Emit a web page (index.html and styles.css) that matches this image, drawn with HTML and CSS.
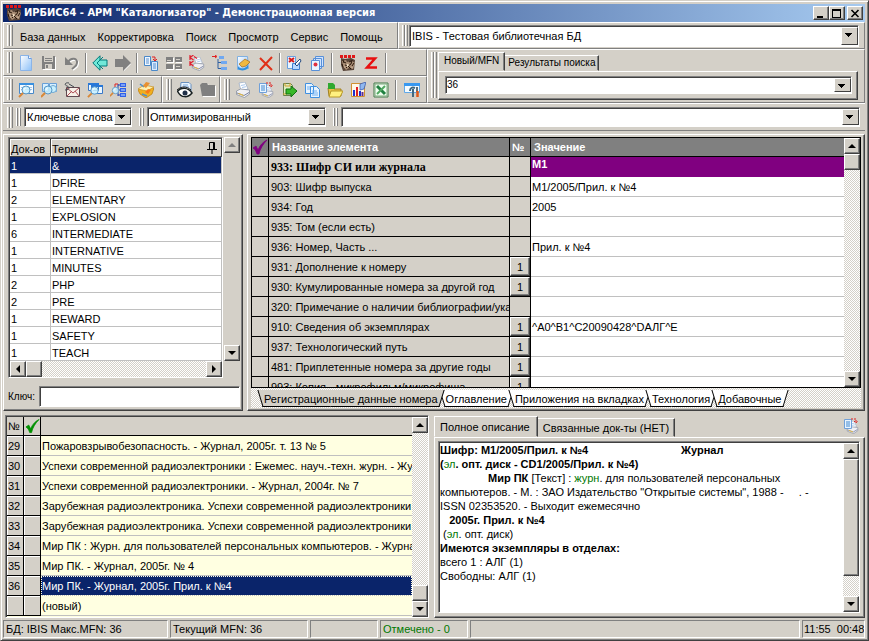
FILE: index.html
```html
<!DOCTYPE html>
<html lang="ru">
<head>
<meta charset="utf-8">
<title>ИРБИС64 - АРМ "Каталогизатор"</title>
<link rel="stylesheet" href="styles.css">
</head>
<body>
<svg class="defs" aria-hidden="true">
  <defs>
    <linearGradient id="paper" x1="0" y1="0" x2="1" y2="1"><stop offset="0" stop-color="#fff"/><stop offset="1" stop-color="#8cc0f8"/></linearGradient>
  </defs>
  <symbol id="i-new" viewBox="0 0 16 16"><path d="M2.500 .500h8l3 3v12h-11z" fill="url(#paper)" stroke="#8ab4e8"/><path d="M10.500 .500v3h3" fill="#fff" stroke="#6c9cdc"/></symbol>
  <symbol id="i-save" viewBox="0 0 16 16"><path d="M2 2h13v13H2z" fill="#fff"/><path d="M1 1h13v13H1z" fill="#808080"/><path d="M3 1h9v6H3zM4 9h7v5H4z" fill="#d4d0c8"/><path d="M4 3.500h7M4 5.500h7" stroke="#808080"/><path d="M5 10h2v3H5z" fill="#808080"/></symbol>
  <symbol id="i-undo" viewBox="0 0 16 16"><path d="M5 8c3-5 10-4 9 1 0 3-3 4-5 6" fill="none" stroke="#fff" stroke-width="2"/><path d="M1 2v8h8z" fill="#808080"/><path d="M4 7c3-5 10-4 9 1 0 3-3 4-5 6" fill="none" stroke="#808080" stroke-width="2"/></symbol>
  <symbol id="i-prev" viewBox="0 0 16 16"><path d="M8 .800L.800 8 8 15.200v-4.200h7V5H8z" fill="#70e8d8" stroke="#007878"/><path d="M11 2L5 8l6 6" fill="none" stroke="#008080"/></symbol>
  <symbol id="i-next" viewBox="0 0 16 16"><path d="M9 2l7 7-7 7v-4H1V6h8z" fill="#fff"/><path d="M8 0l8 8-8 8v-4H0V4h8z" fill="#808080"/></symbol>
  <symbol id="i-copyfield" viewBox="0 0 16 16"><path d="M1.500 1.500h6v9h-6z" fill="#eef6ff" stroke="#4a88c8"/><path d="M8.500 6.500h6v9h-6z" fill="#dcecff" stroke="#4a88c8"/><path d="M3 4h3M3 6h3M3 8h3M10 9h3M10 11h3M10 13h3" stroke="#5890d0"/><path d="M9 2h3v3M10 4l2 2 2-2" fill="none" stroke="#e02020"/></symbol>
  <symbol id="i-blocks" viewBox="0 0 16 16"><path d="M1 3h7v5H1zM10 3h6v5h-6zM1 10h7v5H1zM10 10h6v5h-6z" fill="#fff"/><path d="M0 2h7v5H0zM9 2h7v5H9zM0 9h7v5H0zM9 9h7v5H9z" fill="#808080"/><path d="M1 5.500h4M10 4.500h4M10 11.500h4" stroke="#d4d0c8"/></symbol>
  <symbol id="i-printer" viewBox="0 0 16 16"><path d="M4 1l6-1 3 7-7 2z" fill="#fff" stroke="#a0b0c8" stroke-width=".800"/><path d="M1.500 9l4-2 9 1v4l-5 3.500-8-3z" fill="#f0f0f4" stroke="#8890a0" stroke-width=".800"/><path d="M2 11l7 2.500 5-3" fill="none" stroke="#7880a0"/><path d="M3.500 11.500l5 2" stroke="#f0c030"/><path d="M6 3.500l4-.800M7 5.500l4-.800" stroke="#90b8e8" stroke-width=".800"/></symbol>
  <symbol id="i-printk" viewBox="0 0 16 16"><use href="#i-printer" x="2" y="2" width="14" height="14"/><path d="M1 0v5M4.500 0L1 2.500 4.500 5M1 6v5M4.500 6L1 8.500 4.500 11M5 1.500l3 2" fill="none" stroke="#e02030" stroke-width="1.200"/></symbol>
  <symbol id="i-tree" viewBox="0 0 16 16"><path d="M0 1.500h4M3 0l2 1.500L3 3" fill="none" stroke="#e02020"/><path d="M7 2.500h5M9 7.500h6M9 13.500h6" stroke="#70a8f0" stroke-width="3"/><path d="M6 4v9.500h3M6 7.500h3" fill="none" stroke="#3060a0"/></symbol>
  <symbol id="i-edit" viewBox="0 0 16 16"><path d="M2.500 1.500h10l1 12-11 1z" fill="url(#paper)" stroke="#80b0e0"/><path d="M3 11c2 4 9 3 10-2v4c-2 3-8 3-10 1z" fill="#3090e0"/><path d="M4 9l6-5 5 3-4 4-4 1z" fill="#f0b840" stroke="#a06820" stroke-width=".700"/></symbol>
  <symbol id="i-delete" viewBox="0 0 16 16"><path d="M2 3l12 12M14 2L2 15" stroke="#e03018" stroke-width="2" fill="none"/></symbol>
  <symbol id="i-docx" viewBox="0 0 16 16"><path d="M1.500 1.500h8v12h-8z" fill="#e8f4ff" stroke="#68a0e0"/><path d="M6.500 8.500h7v6h-7z" fill="#b8d8ff" stroke="#4080d0"/><path d="M3 3l5 4M8 3L3 7" stroke="#d81818" stroke-width="2"/><path d="M9 9l5-5 1 2-4 5z" fill="#fff" stroke="#204880"/></symbol>
  <symbol id="i-docs" viewBox="0 0 16 16"><path d="M6.500 1.500h8v10h-8zM4.500 3.500h8v10h-8z" fill="#d0e4ff" stroke="#5890d8"/><path d="M2.500 5.500h8v10h-8z" fill="#e8f4ff" stroke="#5890d8"/><circle cx="6.500" cy="9.500" r="2" fill="#e03040"/></symbol>
  <symbol id="i-irbis" viewBox="0 0 16 16"><path d="M1 3l4 1 6-1 4 2-1 10-11 1-2-6z" fill="#584438"/><path d="M2 6l4-1 1 2 5-1 3 2-2 6-4-1-3 2-3-4z" fill="#a88c74"/><path d="M4 7l2 1M9 7l2-1M5 10l3 1 3-2M6 13l2-2 3 3M2 9l1 3M12 11l2-3M3 5l1 3M12 5l-1 4" stroke="#28180c" fill="none"/><path d="M7 9l2 1-2 2zM4 11l1 2M11 12l2 1" fill="#fff0d0" stroke="#e8d0b8" stroke-width=".500"/><path d="M0 1.500h16" stroke="#e01818" stroke-width="3" stroke-dasharray="3 1"/></symbol>
  <symbol id="i-z" viewBox="0 0 16 16"><path d="M3 3.500h9L4 12.500h10" fill="none" stroke="#e81010" stroke-width="2.500"/></symbol>
  <symbol id="i-lens" viewBox="0 0 16 16"><circle cx="8" cy="8" r="4" fill="#c8f0ff" fill-opacity=".850" stroke="#5898c8"/><path d="M5 11l-4 4" stroke="#d88838" stroke-width="2"/><path d="M6 8c0-2 2-2 2-2" stroke="#fff" fill="none"/></symbol>
  <symbol id="i-find" viewBox="0 0 16 16"><path d="M1.500 1.500h14v10h-14z" fill="#f4faff" stroke="#4888c8"/><path d="M1 2h15" stroke="#3890e0" stroke-width="2"/><path d="M3 5.500h11M3 7.500h11" stroke="#a8c8e8"/><use href="#i-lens" width="16" height="16"/></symbol>
  <symbol id="i-find2" viewBox="0 0 16 16"><path d="M1.500 1.500h6v8h-6zM8.500 1.500h7v8h-7z" fill="#d8f0ff" stroke="#68a0d8"/><circle cx="12" cy="7" r="3.500" fill="#c8f0ff" stroke="#70a8d0"/><use href="#i-lens" x="-1" width="16" height="16"/></symbol>
  <symbol id="i-letter" viewBox="0 0 16 16"><path d="M2.500 5.500h13v9h-13z" fill="#f8f0e8" stroke="#604850"/><path d="M3 6l6 5 6-5M3 14l5-5M15 14l-4-5" stroke="#b05058" fill="none"/><path d="M5 1C1 0 0 3 3 4s3 4-2 4M5 2l5 3" fill="none" stroke="#404850"/></symbol>
  <symbol id="i-find3" viewBox="0 0 16 16"><path d="M1.500 1.500h10v7h-10zM4.500 3.500h11v8h-11z" fill="#eaf6ff" stroke="#3878c8"/><path d="M1 2h11M4 4h12" stroke="#2878d8" stroke-width="2"/><use href="#i-lens" y="1" width="15" height="15"/></symbol>
  <symbol id="i-findtree" viewBox="0 0 16 16"><path d="M8 2v12M6 8h4M8 3h3M8 13h3" stroke="#2040b0"/><path d="M10 1h6v4h-6zM10 6h6v4h-6zM10 11h6v4h-6z" fill="#3060e8"/><path d="M11 3h4M11 8h4M11 13h4" stroke="#c8e0ff"/><path d="M5 5V2h3" fill="none" stroke="#e02020"/><use href="#i-lens" x="-1" y="2" width="13" height="13"/></symbol>
  <symbol id="i-bee" viewBox="0 0 16 16"><path d="M0 8l7-4 9 2-2 6-6 4-6-4z" fill="#f0b020" stroke="#b87810" stroke-width=".700"/><path d="M0 7l6-4 10 2-7 4z" fill="#fff0b0" stroke="#c89020" stroke-width=".700"/><path d="M2 2l4 3M4 12l5 2" stroke="#5090c8" stroke-width="1.500"/><path d="M8 0l4 1-4 5-3-2z" fill="#e89030"/><path d="M7 10l3-3 3 1-3 4z" fill="#f87818"/></symbol>
  <symbol id="i-eye" viewBox="0 0 16 16"><path d="M4 .500h8l2 2v9H3z" fill="#e8f4ff" stroke="#6890c0"/><path d="M6 3h5M6 5h6" stroke="#78a8e0"/><path d="M0 10c4-5 11-5 15 1-4 5-11 5-14-1" fill="#fff" stroke="#182020" stroke-width="1.500"/><circle cx="8" cy="11" r="2.500" fill="#203048"/><path d="M0 8c4-4 10-4 14 0" stroke="#202020" fill="none"/></symbol>
  <symbol id="i-folder" viewBox="0 0 16 16"><path d="M2 4l2-2h4l1 2h7v11H3z" fill="#fff"/><path d="M0 3l2-2h5l1 2h7v11H2z" fill="#808080"/></symbol>
  <symbol id="i-printdoc" viewBox="0 0 16 16"><use href="#i-printer" x="3" y="3" width="13" height="13"/><path d="M1.500 1.500h7v9h-7z" fill="#e8f4ff" stroke="#70a0d8"/><path d="M3 4h4M3 6h4M3 8h4" stroke="#4088d0"/><path d="M8 1h5v4M11 3l2 2 2-2" fill="none" stroke="#e02020" stroke-dasharray="2 1"/></symbol>
  <symbol id="i-export" viewBox="0 0 16 16"><path d="M2.500 1.500h7l2 2v10h-9z" fill="#e0ecc0" stroke="#688048"/><path d="M4 1v3h5V1M2 12h4" stroke="#d0a030" fill="none"/><path d="M5 7h5V4l6 5-6 6v-3H5z" fill="#38b828" stroke="#107010"/></symbol>
  <symbol id="i-copy" viewBox="0 0 16 16"><path d="M1.500 1.500h6l2 2v8h-8zM6.500 4.500h6l3 3v8h-9z" fill="#e8f4ff" stroke="#4090e0"/><path d="M3 5h3M3 7h3M8 9h5M8 11h6M8 13h6" stroke="#70b0f0"/></symbol>
  <symbol id="i-open" viewBox="0 0 16 16"><path d="M1 6h5l1 1h7v7H2z" fill="#e8c048" stroke="#a08020"/><path d="M4 9h12l-3 6H2z" fill="#fff080" stroke="#b89828"/><path d="M1 1h5l2 2v4H1z" fill="#30a830"/></symbol>
  <symbol id="i-chart" viewBox="0 0 16 16"><path d="M1.500 1.500h13v13h-13z" fill="#fff8e8" stroke="#d09030"/><path d="M4 8v6M10 9v5" stroke="#2030d0" stroke-width="2"/><path d="M7 5v9" stroke="#e02020" stroke-width="2"/><path d="M12.500 10v4" stroke="#603090" stroke-width="2"/><path d="M10 2l6-2-2 7-4 1z" fill="#90b8f0" stroke="#4060b0" stroke-width=".800"/></symbol>
  <symbol id="i-excel" viewBox="0 0 16 16"><path d="M1 1h14v14H1z" fill="#f0fff0" stroke="#407848"/><path d="M2 2h12v12H2z" fill="none" stroke="#80a880"/><path d="M4 4l8 8" stroke="#208040" stroke-width="3"/><path d="M12 4l-8 8" stroke="#50a860" stroke-width="2"/></symbol>
  <symbol id="i-tools" viewBox="0 0 16 16"><path d="M.500 1.500h15v9H.500z" fill="#f4fbff" stroke="#60a8e8"/><path d="M0 2.500h16" stroke="#3898f0" stroke-width="3"/><path d="M6 9c0-3 2-4 5-3M9 7v8" stroke="#406880" fill="none" stroke-width="2"/><path d="M13 5v5" stroke="#607078" stroke-width="2"/><path d="M13.500 9v6" stroke="#e05818" stroke-width="2.500"/></symbol>
  <symbol id="i-tick" viewBox="0 0 16 16"><path d="M1 9l3-2 2 4c2-5 5-8 9-10C11 5 8 10 7 15H5C4 12 3 10 1 9z" fill="currentColor" stroke="currentColor" stroke-width=".800"/></symbol>
  <symbol id="i-pin" viewBox="0 0 10 12"><path d="M2.500 7V.500h5V7M0 7.500h10M5 8v4" stroke="#000" fill="none"/><path d="M6.500 1v6" stroke="#000"/></symbol>
</svg>

<div class="window">
  <header class="titlebar">
    <svg class="icon"><use href="#i-irbis"/></svg>
    <h1>ИРБИС64 - АРМ "Каталогизатор" - Демонстрационная версия</h1>
    <div class="winbtns">
      <button class="raised" aria-label="Свернуть"><svg viewBox="0 0 10 9"><path d="M1 7h6v2H1z"/></svg></button>
      <button class="raised" aria-label="Развернуть"><svg viewBox="0 0 10 9"><path d="M0 0h9v9H0zM1 2v6h7V2z" fill-rule="evenodd"/></svg></button>
      <button class="raised close" aria-label="Закрыть"><svg viewBox="0 0 10 9"><path d="M1.500 1l7 7M8.500 1l-7 7" stroke="#000" stroke-width="1.600"/></svg></button>
    </div>
  </header>

  <div class="row">
    <nav class="band menu" aria-label="Меню">
      <i class="grip"></i>
      <button>База данных</button><button>Корректировка</button><button>Поиск</button><button>Просмотр</button><button>Сервис</button><button>Помощь</button>
    </nav>
    <div class="band grow">
      <i class="grip"></i>
      <div class="combo db"><select aria-label="База данных"><option>IBIS - Тестовая библиотечная БД</option></select></div>
    </div>
  </div>

  <div class="tools">
    <div class="toolcol">
      <div class="row">
        <div class="band grow">
          <i class="grip"></i>
          <button class="tb" aria-label="Новая запись"><svg><use href="#i-new"/></svg></button>
          <button class="tb" aria-label="Сохранить"><svg><use href="#i-save"/></svg></button>
          <button class="tb" aria-label="Отменить"><svg><use href="#i-undo"/></svg></button>
          <i class="sep"></i>
          <button class="tb" aria-label="Предыдущая"><svg><use href="#i-prev"/></svg></button>
          <button class="tb" aria-label="Следующая"><svg><use href="#i-next"/></svg></button>
          <i class="sep"></i>
          <button class="tb" aria-label="Копировать поле"><svg><use href="#i-copyfield"/></svg></button>
          <button class="tb" aria-label="Блоки"><svg><use href="#i-blocks"/></svg></button>
          <button class="tb" aria-label="Печать карточки"><svg><use href="#i-printk"/></svg></button>
          <button class="tb" aria-label="Иерархия"><svg><use href="#i-tree"/></svg></button>
          <button class="tb" aria-label="Правка"><svg><use href="#i-edit"/></svg></button>
          <button class="tb" aria-label="Удалить"><svg><use href="#i-delete"/></svg></button>
          <i class="sep"></i>
          <button class="tb" aria-label="Удалить документ"><svg><use href="#i-docx"/></svg></button>
          <button class="tb" aria-label="Документы"><svg><use href="#i-docs"/></svg></button>
          <i class="sep wide"></i>
          <button class="tb" aria-label="Ирбис"><svg><use href="#i-irbis"/></svg></button>
          <button class="tb" aria-label="Z39.50"><svg><use href="#i-z"/></svg></button>
          <i class="sep wide"></i>
        </div>
      </div>
      <div class="row">
        <div class="band">
          <i class="grip"></i>
          <button class="tb" aria-label="Поиск"><svg><use href="#i-find"/></svg></button>
          <button class="tb" aria-label="Комплексный поиск"><svg><use href="#i-find2"/></svg></button>
          <button class="tb" aria-label="Запрос"><svg><use href="#i-letter"/></svg></button>
          <button class="tb" aria-label="Последовательный поиск"><svg><use href="#i-find3"/></svg></button>
          <button class="tb" aria-label="Поиск по рубрикатору"><svg><use href="#i-findtree"/></svg></button>
          <i class="sep"></i>
          <button class="tb" aria-label="Очистить"><svg><use href="#i-bee"/></svg></button>
          <i class="sep blank"></i>
        </div>
        <div class="band">
          <i class="grip"></i>
          <button class="tb" aria-label="Просмотр"><svg><use href="#i-eye"/></svg></button>
          <button class="tb" aria-label="Папка"><svg><use href="#i-folder"/></svg></button>
        </div>
        <div class="band grow">
          <i class="grip"></i>
          <button class="tb" aria-label="Печать"><svg><use href="#i-printer"/></svg></button>
          <button class="tb" aria-label="Печать документа"><svg><use href="#i-printdoc"/></svg></button>
          <button class="tb" aria-label="Экспорт"><svg><use href="#i-export"/></svg></button>
          <button class="tb" aria-label="Копировать"><svg><use href="#i-copy"/></svg></button>
          <button class="tb" aria-label="Открыть"><svg><use href="#i-open"/></svg></button>
          <button class="tb" aria-label="Статистика"><svg><use href="#i-chart"/></svg></button>
          <button class="tb" aria-label="Excel"><svg><use href="#i-excel"/></svg></button>
          <i class="sep wide"></i>
          <button class="tb" aria-label="Настройка"><svg><use href="#i-tools"/></svg></button>
        </div>
      </div>
    </div>
    <div class="band grow mfn">
      <i class="grip"></i>
      <div class="tabbox">
        <div class="tabs small"><button class="tab active">Новый/MFN</button><button class="tab">Результаты поиска</button></div>
        <div class="page"><div class="combo"><select aria-label="MFN"><option>36</option></select></div></div>
      </div>
    </div>
  </div>

  <div class="row filters">
    <i class="grip"></i><i class="grip tight"></i>
    <div class="combo kind"><select aria-label="Вид словаря"><option>Ключевые слова</option></select></div>
    <i class="grip tight"></i>
    <div class="combo format"><select aria-label="Рабочий лист"><option>Оптимизированный</option></select></div>
    <i class="grip tight"></i>
    <div class="combo extra"><select aria-label="Формат"><option></option></select></div>
  </div>

  <main>
    <div class="upper">
      <section class="panel dict">
        <div class="dictbody">
          <div class="sunken termbox">
            <div class="clip">
              <table class="terms">
                <colgroup><col class="c-docs"><col></colgroup>
                <thead><tr><th>Док-ов</th><th>Термины<svg class="pin"><use href="#i-pin"/></svg></th></tr></thead>
                <tbody>
                  <tr class="sel"><td>1</td><td>&amp;</td></tr>
                  <tr><td>1</td><td>DFIRE</td></tr>
                  <tr><td>2</td><td>ELEMENTARY</td></tr>
                  <tr><td>1</td><td>EXPLOSION</td></tr>
                  <tr><td>6</td><td>INTERMEDIATE</td></tr>
                  <tr><td>1</td><td>INTERNATIVE</td></tr>
                  <tr><td>1</td><td>MINUTES</td></tr>
                  <tr><td>2</td><td>PHP</td></tr>
                  <tr><td>2</td><td>PRE</td></tr>
                  <tr><td>1</td><td>REWARD</td></tr>
                  <tr><td>1</td><td>SAFETY</td></tr>
                  <tr><td>1</td><td>TEACH</td></tr>
                </tbody>
              </table>
            </div>
            <div class="hscroll"><button class="raised arrow left" aria-label="Влево"></button><i class="raised thumb"></i><i class="rest"></i><button class="raised arrow right" aria-label="Вправо"></button></div>
          </div>
          <div class="vscroll plain"><button class="raised arrow up off" aria-label="Вверх" disabled></button><i class="rest"></i><button class="raised arrow down" aria-label="Вниз"></button></div>
        </div>
        <div class="keyrow"><label for="key">Ключ:</label><input id="key" class="sunken" type="text"></div>
      </section>

      <section class="panel fields">
        <div class="fieldbox">
          <div class="clip">
            <table class="grid">
              <colgroup><col class="c-mark"><col class="c-name"><col class="c-num"><col></colgroup>
              <thead><tr><th><svg class="tick"><use href="#i-tick"/></svg></th><th>Название элемента</th><th>№</th><th>Значение</th></tr></thead>
              <tbody>
                <tr class="current"><td></td><td>933: Шифр СИ или журнала</td><td></td><td>M1</td></tr>
                <tr><td></td><td>903: Шифр выпуска</td><td></td><td>M1/2005/Прил. к №4</td></tr>
                <tr><td></td><td>934: Год</td><td></td><td>2005</td></tr>
                <tr><td></td><td>935: Том (если есть)</td><td></td><td></td></tr>
                <tr><td></td><td>936: Номер, Часть ...</td><td></td><td>Прил. к №4</td></tr>
                <tr><td></td><td>931: Дополнение к номеру</td><td><button class="raised">1</button></td><td></td></tr>
                <tr><td></td><td>930: Кумулированные номера за другой год</td><td><button class="raised">1</button></td><td></td></tr>
                <tr><td></td><td>320: Примечание о наличии библиографии/указателя</td><td></td><td></td></tr>
                <tr><td></td><td>910: Сведения об экземплярах</td><td><button class="raised">1</button></td><td>^A0^B1^C20090428^DАЛГ^E</td></tr>
                <tr><td></td><td>937: Технологический путь</td><td><button class="raised">1</button></td><td></td></tr>
                <tr><td></td><td>481: Приплетенные номера за другие годы</td><td><button class="raised">1</button></td><td></td></tr>
                <tr><td></td><td>993: Копия - микрофильм/микрофиша</td><td><button class="raised">1</button></td><td></td></tr>
              </tbody>
            </table>
          </div>
          <div class="vscroll"><button class="raised arrow up" aria-label="Вверх"></button><i class="raised thumb"></i><i class="rest"></i><button class="raised arrow down" aria-label="Вниз"></button></div>
        </div>
        <div class="sheets">
          <button class="sheet active">Регистрационные данные номера</button><button class="sheet">Оглавление</button><button class="sheet">Приложения на вкладках</button><button class="sheet">Технология</button><button class="sheet">Добавочные</button>
        </div>
      </section>
    </div>

    <div class="lower">
      <section class="sunken records">
        <div class="clip">
          <table class="list">
            <colgroup><col class="c-mark"><col class="c-mark"><col></colgroup>
            <thead><tr><th>№</th><th><svg class="tick"><use href="#i-tick"/></svg></th><th></th></tr></thead>
            <tbody>
              <tr><td>29</td><td></td><td>Пожаровзрывобезопасность. - Журнал, 2005г. т. 13 № 5</td></tr>
              <tr><td>30</td><td></td><td>Успехи современной радиоэлектроники : Ежемес. науч.-техн. журн. - Журнал</td></tr>
              <tr><td>31</td><td></td><td>Успехи современной радиоэлектроники. - Журнал, 2004г. № 7</td></tr>
              <tr><td>32</td><td></td><td>Зарубежная радиоэлектроника. Успехи современной радиоэлектроники</td></tr>
              <tr><td>33</td><td></td><td>Зарубежная радиоэлектроника. Успехи современной радиоэлектроники</td></tr>
              <tr><td>34</td><td></td><td>Мир ПК : Журн. для пользователей персональных компьютеров. - Журнал</td></tr>
              <tr><td>35</td><td></td><td>Мир ПК. - Журнал, 2005г. № 4</td></tr>
              <tr class="sel"><td>36</td><td></td><td>Мир ПК. - Журнал, 2005г. Прил. к №4</td></tr>
              <tr><td></td><td></td><td>(новый)</td></tr>
            </tbody>
          </table>
        </div>
        <div class="vscroll"><button class="raised arrow up" aria-label="Вверх"></button><i class="rest"></i><i class="raised thumb"></i><button class="raised arrow down" aria-label="Вниз"></button></div>
      </section>

      <section class="detail">
        <div class="tabs"><button class="tab active">Полное описание</button><button class="tab">Связанные док-ты (НЕТ)</button><button class="tb print" aria-label="Печать описания"><svg><use href="#i-printdoc"/></svg></button></div>
        <div class="page">
          <div class="sunken desc">
            <div class="text">
              <p class="head"><b>Шифр: M1/2005/Прил. к №4</b><b>Журнал</b></p>
              <p><b>(<span class="g light">эл</span>. опт. диск - CD1/2005/Прил. к №4)</b></p>
              <p class="indent"><b>Мир ПК</b> [Текст] : <span class="g">журн</span>. для пользователей персональных компьютеров. - М. : ЗАО Издательство "Открытые системы", 1988 - &nbsp; &nbsp; . - ISSN 02353520. - Выходит ежемесячно</p>
              <p><b>&nbsp;&nbsp; 2005г. Прил. к №4</b></p>
              <p>&nbsp;(<span class="g">эл</span>. опт. диск)</p>
              <p><b>Имеются экземпляры в отделах:</b></p>
              <p>всего 1 : АЛГ (1)</p>
              <p>Свободны: АЛГ (1)</p>
            </div>
            <div class="vscroll"><button class="raised arrow up" aria-label="Вверх"></button><i class="raised thumb long"></i><i class="rest"></i><button class="raised arrow down" aria-label="Вниз"></button></div>
          </div>
        </div>
      </section>
    </div>
  </main>

  <footer class="status">
    <span class="s1">БД: IBIS Макс.MFN: 36</span>
    <span class="s2">Текущий MFN: 36</span>
    <span class="s3"></span>
    <span class="s4 g">Отмечено - 0</span>
    <span class="s5"></span>
    <span class="s6">11:55&nbsp; 00:48</span>
  </footer>
</div>
</body>
</html>
```
FILE: styles.css
```css
* { box-sizing: border-box; }

:root {
  --face: #d4d0c8;
  --shade: #808080;
  --dark: #404040;
  --navy: #0a246a;
  --dither: repeating-conic-gradient(#fff 0 25%, #d4d0c8 0 50%) 0 0 / 2px 2px;
}

body {
  margin: 0;
  background: var(--face);
  color: #000;
  font: 11px/14px "Liberation Sans", Arial, sans-serif;
}

button, select, input { font: inherit; color: inherit; margin: 0; padding: 0; border-radius: 0; }
button { border: 0; background: none; }
svg { display: block; }
i { flex: none; }
p, h1 { margin: 0; }
.defs { position: absolute; width: 0; height: 0; }
.g { color: #007800; }
.light { font-weight: normal; }
.grow { flex: 1; min-width: 0; }

.window {
  display: flex;
  flex-direction: column;
  height: 100vh;
  min-height: 560px;
  padding: 3px 3px 2px 2px;
  border: 1px solid;
  border-color: var(--face) var(--dark) var(--dark) var(--face);
  box-shadow: inset 1px 1px #fff, inset -1px -1px var(--shade);
}

.raised {
  background: var(--face);
  border: 1px solid;
  border-color: #fff var(--dark) var(--dark) #fff;
  box-shadow: inset -1px -1px var(--shade);
}
.sunken {
  background: #fff;
  border: 1px solid;
  border-color: var(--shade) #fff #fff var(--shade);
  box-shadow: inset 1px 1px var(--dark);
}

/* title bar */
.titlebar {
  display: flex;
  flex: none;
  align-items: center;
  height: 18px;
  padding: 0 2px 0 3px;
  background: linear-gradient(90deg, #0a246a, #a6caf0);
}
.titlebar .icon { width: 16px; height: 16px; margin-right: 2px; }
.titlebar h1 { flex: 1; color: #fff; font: bold 11px/16px "DejaVu Sans Condensed", Verdana, sans-serif; white-space: nowrap; overflow: hidden; }
.winbtns { display: flex; }
.winbtns button { width: 16px; height: 14px; padding: 1px 2px; }
.winbtns .close { margin-left: 2px; }
.winbtns svg { width: 10px; height: 9px; }

/* tool bands */
.row { display: flex; flex: none; height: 27px; }
.band {
  display: flex;
  align-items: center;
  padding-left: 3px;
  border: 1px solid;
  border-color: #fff var(--shade) var(--shade) #fff;
}
.grip {
  width: 6px;
  height: 21px;
  margin-right: 1px;
  border: solid #fff;
  border-width: 0 0 0 1px;
  background: linear-gradient(90deg, var(--face) 0 1px, var(--shade) 1px 2px, #fff 2px 3px, var(--face) 3px 4px, var(--shade) 4px);
}
.menu { width: 395px; gap: 12px; }
.menu .grip { margin-right: -5px; }
.menu button { white-space: nowrap; padding-top: 2px; }
.tools { display: flex; flex: none; }
.toolcol { flex: none; width: 424px; }
.tb { flex: none; display: grid; place-items: center; width: 23px; height: 22px; }
.tb svg { width: 16px; height: 16px; }
.sep { width: 2px; height: 20px; margin: 0 1px 0 2px; border-left: 1px solid var(--shade); border-right: 1px solid #fff; }
.sep.wide { margin: 0 3px; }
.sep.blank { margin: 0 1px; border-color: transparent; }

.combo { position: relative; flex: 1; min-width: 0; height: 20px; }
.combo select {
  width: 100%;
  height: 100%;
  padding: 0 17px 0 2px;
  appearance: none;
  background: #fff;
  border: 1px solid;
  border-color: var(--shade) #fff #fff var(--shade);
  box-shadow: inset 1px 1px var(--dark);
}
.combo::after {
  content: "";
  position: absolute;
  top: 2px;
  right: 1px;
  bottom: 2px;
  width: 15px;
  border: 1px solid;
  border-color: #fff var(--dark) var(--dark) #fff;
  background-color: var(--face);
  background-image: linear-gradient(#000, #000), linear-gradient(#000, #000), linear-gradient(#000, #000), linear-gradient(#000, #000);
  background-size: 7px 1px, 5px 1px, 3px 1px, 1px 1px;
  background-position: 3px 5px, 4px 6px, 5px 7px, 6px 8px;
  background-repeat: no-repeat;
  pointer-events: none;
}
.db { height: 22px; margin-right: 5px; }

.mfn { align-items: stretch; padding: 2px 6px 2px 3px; }
.mfn .grip { height: 46px; }
.tabbox { flex: 1; min-width: 0; display: flex; flex-direction: column; }
.tabs { display: flex; flex: none; align-items: flex-end; }
.tab {
  position: relative;
  height: 16px;
  padding: 0 4px;
  border: 1px solid;
  border-color: #fff var(--dark) transparent #fff;
  border-left-width: 0;
  box-shadow: inset -1px 0 var(--shade);
  white-space: nowrap;
}
.tab.active { height: 19px; padding: 0 6px 3px; border-left-width: 1px; }
.tabs.small { font-size: 10px; }
.tabs.small .tab { padding: 0 3px; }
.tabs.small .tab.active { padding: 0 5px 1px; }
.page { flex: 1; min-height: 0; border: 1px solid; border-color: #fff var(--dark) var(--dark) #fff; box-shadow: inset -1px -1px var(--shade); }
.mfn .page { padding: 4px 5px 4px 6px; }
.mfn .combo { height: 18px; }
.mfn select { font-size: 10px; padding-left: 1px; }

.filters { align-items: center; height: 28px; padding-left: 4px; border-top: 1px solid #fff; border-bottom: 1px solid var(--shade); }
.filters .grip { margin: 0; }
.filters .grip.tight { width: 5px; margin: 0 3px; background: linear-gradient(90deg, var(--shade) 1px, var(--face) 1px 2px, #fff 2px 3px, var(--shade) 3px); height: 18px; }
.filters .combo { flex: none; margin-right: 4px; }
.filters .combo.kind { width: 108px; }
.filters .combo.format { width: 179px; }
.filters .combo.extra { flex: 1; margin-right: 5px; }

/* work area */
main { flex: 1; min-height: 0; display: grid; grid-template-rows: minmax(0, 278fr) minmax(0, 203fr); gap: 4px; padding-top: 3px; }
.upper, .lower { display: flex; gap: 4px; min-height: 0; }
.lower { gap: 5px; }
.panel {
  display: flex;
  flex-direction: column;
  min-width: 0;
  border: 1px solid;
  border-color: #fff var(--dark) var(--dark) #fff;
  box-shadow: inset -1px -1px var(--shade);
}
.clip { flex: 1; min-width: 0; min-height: 0; overflow: hidden; }

table { width: 100%; table-layout: fixed; border-collapse: separate; border-spacing: 0; }
th, td { padding: 0 2px; font-weight: normal; text-align: left; white-space: nowrap; overflow: hidden; }

.vscroll { display: flex; flex: none; flex-direction: column; width: 16px; background: var(--dither); }
.hscroll { display: flex; flex: none; height: 16px; background: var(--dither); }
.plain { background: none; }
.rest { flex: 1; }
.thumb { width: 16px; height: 16px; }
.thumb.long { height: auto; flex: 117; }
.long + .rest { flex: 21; }
.arrow { display: grid; place-items: center; flex: none; width: 16px; height: 16px; }
.arrow::before { content: ""; border: 4px solid transparent; }
.arrow.up::before { border-top: 0; border-bottom-color: #000; }
.arrow.down::before { border-bottom: 0; border-top-color: #000; }
.arrow.left::before { border-left: 0; border-right-color: #000; }
.arrow.right::before { border-right: 0; border-left-color: #000; }
.arrow.off::before { border-bottom-color: var(--shade); }

.dict { flex: none; width: 240px; padding: 2px 2px 3px 4px; }
.dictbody { display: flex; flex: 1; min-height: 0; }
.termbox { display: flex; flex: 1; flex-direction: column; min-width: 0; padding: 1px 0 0 1px; }
.dictbody .vscroll { margin: 0 0 17px 1px; }
.c-docs { width: 41px; }
.terms th { position: relative; height: 18px; background: var(--face); border-right: 1px solid var(--dark); border-bottom: 1px solid var(--dark); padding: 2px 1px 0; box-shadow: inset 1px 1px #fff; }
.terms td { height: 17px; border-right: 1px solid #c0c0c0; border-bottom: 1px solid #c0c0c0; padding: 1px 1px 0; }
.terms .sel td { background: var(--navy); color: #fff; }
.pin { position: absolute; right: 4px; top: 3px; width: 10px; height: 12px; }
.keyrow { display: flex; flex: none; align-items: center; gap: 4px; padding-top: 8px; font-size: 10px; }
.keyrow input { flex: 1; min-width: 0; height: 21px; padding: 0 3px; }

.fields { flex: 1; padding: 2px 3px 2px 3px; background: var(--face); }
.fieldbox { display: flex; flex: 1; min-height: 0; border: 1px solid #000; }
.fieldbox .clip { background: #fff; }
.c-mark { width: 17px; }
.c-name { width: 241px; }
.c-num { width: 21px; }
.grid th { height: 19px; background: var(--shade); color: #fff; font-weight: bold; border-right: 1px solid #000; border-bottom: 1px solid #000; }
.grid th:last-child { border-right: 0; }
.grid th:nth-child(2), .grid th:nth-child(4) { padding-left: 3px; }
.grid th:first-child { padding: 0; }
.tick { width: 16px; height: 16px; color: #800080; }
.grid td { height: 20px; background: var(--face); border-right: 1px solid #000; border-bottom: 1px solid #000; }
.grid td:nth-child(3) { padding: 0; }
.grid td button { display: block; width: 20px; height: 19px; }
.grid td:last-child { background: #fff; border-right: 0; border-bottom-color: #c0c0c0; padding-left: 1px; }
.grid .current td:nth-child(2) { font: bold 12px/16px "Liberation Serif", "Times New Roman", serif; }
.grid .current td:last-child { background: #800080; border-color: #800080; color: #fff; font-weight: bold; vertical-align: top; }

.sheets { display: flex; flex: none; height: 20px; padding: 2px 0 0 9px; background: var(--dither); overflow: hidden; }
.sheet { position: relative; z-index: 0; height: 17px; padding: 0 4px; white-space: nowrap; }
.sheet::before, .sheet::after { content: ""; position: absolute; z-index: -1; top: 0; bottom: 0; background: #fff; border-bottom: 1px solid #000; }
.sheet::before { left: 0; right: 40%; border-left: 1px solid #000; transform: skewX(17deg); }
.sheet::after { left: 40%; right: 0; border-right: 1px solid #000; transform: skewX(-17deg); }
.sheet.active { z-index: 1; }
.sheet.active::before, .sheet.active::after { background: var(--face); }

.records { display: flex; flex: none; width: 424px; margin-left: 2px; padding: 1px 0 0 1px; }
.records .clip { background: #ffffe1; }
.list th { height: 19px; background: var(--face); border-right: 1px solid #000; border-bottom: 1px solid #000; padding: 0 1px; }
.list th:last-child { border-right: 0; }
.list th .tick { width: 15px; color: #009000; }
.list td { height: 20px; background: var(--face); border-right: 1px solid #000; border-bottom: 1px solid #000; padding: 0 1px; box-shadow: inset 1px 1px #fff; }
.list td:last-child { background: #ffffe1; border-right: 0; border-bottom-color: #c0c0c0; box-shadow: none; }
.list .sel td:last-child { background: var(--navy); color: #fff; outline: 1px dotted #ffffe1; outline-offset: -1px; }

.detail { display: flex; flex: 1; flex-direction: column; min-width: 0; }
.detail .tab { height: 19px; padding: 0 5px; }
.detail .tab.active { height: 21px; padding: 0 7px 0 5px; }
.detail .print { margin: 0 3px 0 auto; }
.detail .page { padding: 3px 4px 4px 3px; display: flex; }
.desc { display: flex; flex: 1; min-width: 0; padding: 1px 0 0 1px; }
.text { flex: 1; min-width: 0; overflow: hidden; padding-right: 12px; }
.head b:first-child { display: inline-block; width: 241px; }
.indent { text-indent: 48px; }

.status { display: flex; flex: none; gap: 2px; height: 20px; padding-top: 2px; }
.status span { border: 1px solid; border-color: var(--shade) #fff #fff var(--shade); padding: 1px 1px 0 2px; line-height: 15px; white-space: nowrap; overflow: hidden; flex: none; }
.s1 { width: 165px; }
.s2 { width: 138px; }
.s3 { width: 68px; }
.s4 { width: 88px; }
.status .s5 { flex: 1; }
.status .s6 { width: 63px; padding-left: 1px; }
```
